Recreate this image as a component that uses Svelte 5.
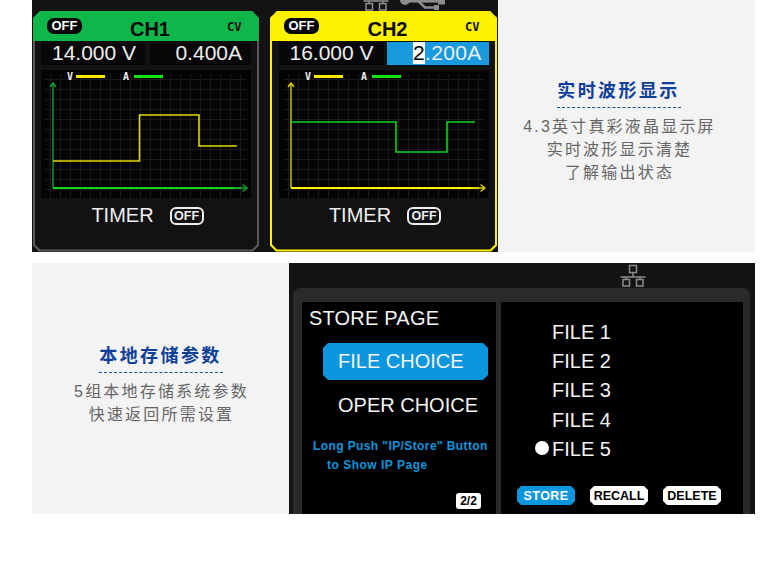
<script>
  const channels = [
    {
      id: 'ch1', name: 'CH1', volt: '14.000 V', cur: '0.400A',
      wave: '12,91 98.5,91 98.5,45 158,45 158,76 196,76',
      waveColor: '#e0d800', selected: false
    },
    {
      id: 'ch2', name: 'CH2', volt: '16.000 V', cur: '.200A',
      wave: '12,52 117,52 117,82 168,82 168,52 196,52',
      waveColor: '#12d41e', selected: true
    }
  ];
  const files = ['FILE 1', 'FILE 2', 'FILE 3', 'FILE 4', 'FILE 5'];
</script>

{#snippet network()}
  <svg class="net" width="26" height="24" viewBox="0 0 26 24">
    <g fill="none" stroke="#8c8c8c" stroke-width="1.5">
      <rect x="9.5" y="1.5" width="7" height="7" />
      <path d="M13 8.500V13M0.500 13H25.500M6 13V15.500M20 13V15.500" />
      <rect x="3" y="15.500" width="6.500" height="6.500" />
      <rect x="16.500" y="15.500" width="6.500" height="6.500" />
    </g>
  </svg>
{/snippet}

<div class="page">
  <section class="row top">
    <div class="scope">
      <div class="status">
        {@render network()}
        <svg class="usb" width="46" height="11" viewBox="0 0 46 11">
          <g fill="#8c8c8c">
            <circle cx="5" cy="0" r="5" />
            <rect x="5" y="0" width="40" height="2.600" />
            <path d="M18 1 L25 7.500 H36" fill="none" stroke="#8c8c8c" stroke-width="2.400" />
            <rect x="34" y="5" width="5" height="5" />
            <rect x="38" y="0" width="7" height="4.500" />
          </g>
        </svg>
      </div>
      <div class="cards">
        {#each channels as c}
          <div class="card {c.id}">
            <div class="card-inner">
              <header class="head">
                <span class="pill">OFF</span>
                <strong class="name">{c.name}</strong>
                <span class="mode">CV</span>
              </header>
              <div class="reads">
                <div class="read volt">{c.volt}</div>
                <div class="read cur">
                  {#if c.selected}<span class="cursor">2</span>{/if}{c.cur}
                </div>
              </div>
              <svg class="chart" width="210" height="128" viewBox="0 0 210 128">
                <defs>
                  <pattern id="grid-{c.id}" width="10" height="10" patternUnits="userSpaceOnUse">
                    <path d="M9.500 0V10M0 9.500H10" fill="none" stroke="#191919" stroke-width="1" />
                  </pattern>
                </defs>
                <rect width="210" height="128" fill="#040404" />
                <rect x="4" y="4" width="202" height="124" fill="url(#grid-{c.id})" />
                <text class="lg" x="26" y="10">V</text>
                <rect x="35" y="5" width="29" height="3" fill="#f5ea00" />
                <text class="lg" x="82" y="10">A</text>
                <rect x="93" y="5" width="29" height="3" fill="#12e612" />
                <g class="axis" fill="none">
                  <path class="axis-y" d="M12 118V14M9 17L12 13L15 17" />
                  <polyline points={c.wave} stroke={c.waveColor} stroke-width="1.600" />
                  <path class="axis-x" d="M12 118H200" />
                  <path class="axis-h" d="M192 118H206M201.500 114.500L206 118L201.500 121.500" />
                </g>
              </svg>
              <div class="timer">
                <span>TIMER</span>
                <span class="off">OFF</span>
              </div>
            </div>
          </div>
        {/each}
      </div>
    </div>
    <aside class="note note-a">
      <h2>实时波形显示</h2>
      <p>4.3英寸真彩液晶显示屏</p>
      <p>实时波形显示清楚</p>
      <p>了解输出状态</p>
    </aside>
  </section>

  <section class="row bottom">
    <aside class="note note-b">
      <h2>本地存储参数</h2>
      <p>5组本地存储系统参数</p>
      <p>快速返回所需设置</p>
    </aside>
    <div class="device">
      <div class="device-bar">{@render network()}</div>
      <div class="frame">
        <div class="pane left">
          <div class="store-title">STORE PAGE</div>
          <div class="choice active">FILE CHOICE</div>
          <div class="choice">OPER CHOICE</div>
          <p class="hint">Long Push "IP/Store" Button</p>
          <p class="hint second">to Show IP Page</p>
          <span class="pageno">2/2</span>
        </div>
        <div class="pane right">
          <ul class="files">
            {#each files as f, i}
              <li>{#if i === 4}<i class="dot"></i>{/if}{f}</li>
            {/each}
          </ul>
          <div class="actions">
            <span class="btn on">STORE</span>
            <span class="btn">RECALL</span>
            <span class="btn">DELETE</span>
          </div>
        </div>
      </div>
    </div>
  </section>
</div>

<style>
  :global(body) {
    margin: 0;
    background: #fff;
    font-family: "Liberation Sans", Arial, sans-serif;
  }
  .page {
    width: 723px;
    margin-left: 32px;
    display: flex;
    flex-direction: column;
    gap: 11px;
  }
  .row {
    display: flex;
    height: 252px;
  }
  .bottom {
    height: 251px;
  }

  /* top dark scope */
  .scope {
    width: 466px;
    flex: none;
    background: #131313;
    overflow: hidden;
  }
  .status {
    height: 11px;
    display: flex;
    padding-left: 331px;
    overflow: hidden;
  }
  .status .net {
    margin-top: -12px;
    flex: none;
  }
  .usb {
    margin-left: 11px;
    flex: none;
  }
  .cards {
    display: flex;
    padding-left: 1px;
    gap: 11px;
  }
  .card {
    width: 226px;
    height: 240.500px;
    padding: 2px;
    box-sizing: border-box;
    clip-path: polygon(7px 0, calc(100% - 7px) 0, 100% 7px, 100% calc(100% - 6px), calc(100% - 6px) 100%, 6px 100%, 0 calc(100% - 6px), 0 7px);
  }
  .ch1 { background: #5a5a5a; }
  .ch2 { width: 227px; background: #fff200; }
  .card-inner {
    height: 100%;
    background: #121212;
    clip-path: polygon(-2px -2px, calc(100% + 2px) -2px, 100% 100%, 100% calc(100% - 5px), calc(100% - 5px) 100%, 5px 100%, 0 calc(100% - 5px), -2px 100%);
    display: flex;
    flex-direction: column;
    align-items: center;
  }
  .head {
    align-self: stretch;
    height: 30px;
    margin: -2px -2px 0;
    flex: none;
    display: flex;
    align-items: center;
    padding: 0 16px 0 14px;
  }
  .ch1 .head { background: #0fb64a; }
  .ch2 .head { background: #fff200; }
  .pill {
    width: 35px;
    height: 16px;
    margin-top: 0;
    border-radius: 7px;
    background: #050505;
    color: #fff;
    font-size: 13px;
    font-weight: 700;
    line-height: 16px;
    text-align: center;
  }
  .name {
    flex: 1;
    margin: 6px 9px 0 0;
    text-align: center;
    font-size: 20px;
    color: #0a0a0a;
  }
  .mode {
    width: 16px;
    margin-top: 2px;
    font-family: "DejaVu Sans Mono", monospace;
    font-size: 12px;
    font-weight: 700;
    color: #111;
  }
  .reads {
    margin-top: 1px;
    display: flex;
    gap: 5px;
    width: 210px;
    flex: none;
  }
  .ch2 .reads {
    gap: 3px;
  }
  .read {
    flex: 1 1 0;
    min-width: 0;
    height: 23px;
    box-sizing: border-box;
    background: #070707;
    color: #eee;
    font-size: 21px;
    line-height: 22px;
    white-space: nowrap;
  }
  .volt {
    padding-left: 11px;
  }
  .cur {
    text-align: right;
    padding-right: 9px;
  }
  .ch2 .cur {
    background: #1a9ade;
    padding-right: 7px;
    letter-spacing: 0.300px;
  }
  .cursor {
    display: inline-block;
    width: 12px;
    background: #fff;
    color: #000;
    text-align: center;
  }
  .chart {
    margin-top: 5px;
    flex: none;
    display: block;
  }
  .lg {
    font-family: "DejaVu Sans Mono", monospace;
    font-size: 10px;
    font-weight: 700;
    fill: #eee;
  }
  .axis path { stroke-width: 1.4; }
  .ch1 .axis-y { stroke: #17a02c; }
  .ch1 .axis-x { stroke: #14d81c; stroke-width: 2; }
  .ch1 .axis-h { stroke: #17a02c; }
  .ch2 .axis-y { stroke: #d8d000; }
  .ch2 .axis-x { stroke: #fff200; stroke-width: 2; }
  .ch2 .axis-h { stroke: #d8d000; }
  .timer {
    margin: 6px 0 0 3px;
    display: flex;
    align-items: center;
    gap: 16px;
    color: #eee;
    font-size: 20px;
  }
  .off {
    width: 34px;
    height: 18px;
    box-sizing: border-box;
    border: 2px solid #eee;
    border-radius: 6px;
    font-size: 12.500px;
    font-weight: 700;
    line-height: 14px;
    text-align: center;
  }

  /* gray text panels */
  .note {
    flex: 1;
    background: #f3f3f4;
    display: flex;
    flex-direction: column;
    align-items: center;
    font-family: "Liberation Sans", "Noto Sans CJK SC", sans-serif;
  }
  .note h2 {
    margin: 0 0 7px;
    padding-bottom: 3px;
    width: 124px;
    border-bottom: 1px dashed #1f4b9c;
    color: #0f4099;
    font-size: 18px;
    font-weight: 700;
    line-height: 26px;
    letter-spacing: 2.400px;
    text-align: center;
    white-space: nowrap;
  }
  .note p {
    margin: 0 0 0 2px;
    color: #666;
    font-size: 16px;
    line-height: 23px;
    letter-spacing: 2.200px;
    white-space: nowrap;
  }
  .note-a {
    padding: 78px 16px 0 0;
  }
  .note-b {
    width: 257px;
    flex: none;
    padding-top: 80px;
  }

  /* store page device */
  .device {
    flex: 1;
    background: #141414;
    display: flex;
    flex-direction: column;
    overflow: hidden;
  }
  .device-bar {
    height: 25px;
    flex: none;
    padding-left: 331px;
  }
  .device-bar .net {
    margin-top: 1px;
    display: block;
  }
  .frame {
    flex: 1;
    min-height: 0;
    margin: 0 5px 0 4px;
    padding: 14px 7px 0 9px;
    background: #2a2a2a;
    border-radius: 7px 7px 0 0;
    display: flex;
    gap: 5px;
  }
  .pane {
    background: #000;
    color: #f4f4f4;
    position: relative;
  }
  .left {
    width: 194px;
    flex: none;
    padding-top: 6px;
    box-sizing: border-box;
  }
  .right {
    flex: 1;
    padding: 16px 0 0 16px;
  }
  .store-title {
    margin-left: 7px;
    font-size: 20px;
    line-height: 20px;
    letter-spacing: 0.200px;
  }
  .choice {
    margin: 15px 8px 0 21px;
    height: 37px;
    padding-left: 15px;
    font-size: 20px;
    line-height: 37px;
  }
  .choice.active {
    background: #0b96de;
    clip-path: polygon(5px 0, calc(100% - 5px) 0, 100% 5px, 100% calc(100% - 5px), calc(100% - 5px) 100%, 5px 100%, 0 calc(100% - 5px), 0 5px);
  }
  .choice + .choice {
    margin-top: 7px;
  }
  .hint {
    margin: 14px 0 0 11px;
    color: #0b96de;
    font-size: 12px;
    font-weight: 700;
    line-height: 16px;
    letter-spacing: 0.400px;
    white-space: nowrap;
  }
  .hint.second {
    margin: 3px 0 0 25px;
    letter-spacing: 0.500px;
  }
  .pageno {
    position: absolute;
    left: 154px;
    top: 191px;
    width: 25px;
    height: 16px;
    background: #fff;
    color: #000;
    border-radius: 3px;
    font-size: 12px;
    font-weight: 700;
    line-height: 16px;
    text-align: center;
  }
  .files {
    list-style: none;
    margin: 0;
    padding: 0 0 0 35px;
    font-size: 20px;
    line-height: 29.200px;
  }
  .files li {
    display: flex;
    align-items: center;
  }
  .dot {
    width: 14px;
    height: 14px;
    margin: -3px 3px 0 -17px;
    border-radius: 50%;
    background: #fff;
  }
  .actions {
    display: flex;
    gap: 15px;
    margin-top: 22px;
  }
  .btn {
    width: 58px;
    height: 19px;
    background: #fff;
    color: #000;
    clip-path: polygon(4px 0, calc(100% - 4px) 0, 100% 4px, 100% calc(100% - 4px), calc(100% - 4px) 100%, 4px 100%, 0 calc(100% - 4px), 0 4px);
    font-size: 12.500px;
    font-weight: 700;
    line-height: 20px;
    text-align: center;
  }
  .btn.on {
    background: #0b96de;
    color: #fff;
    letter-spacing: 0.400px;
  }
</style>
